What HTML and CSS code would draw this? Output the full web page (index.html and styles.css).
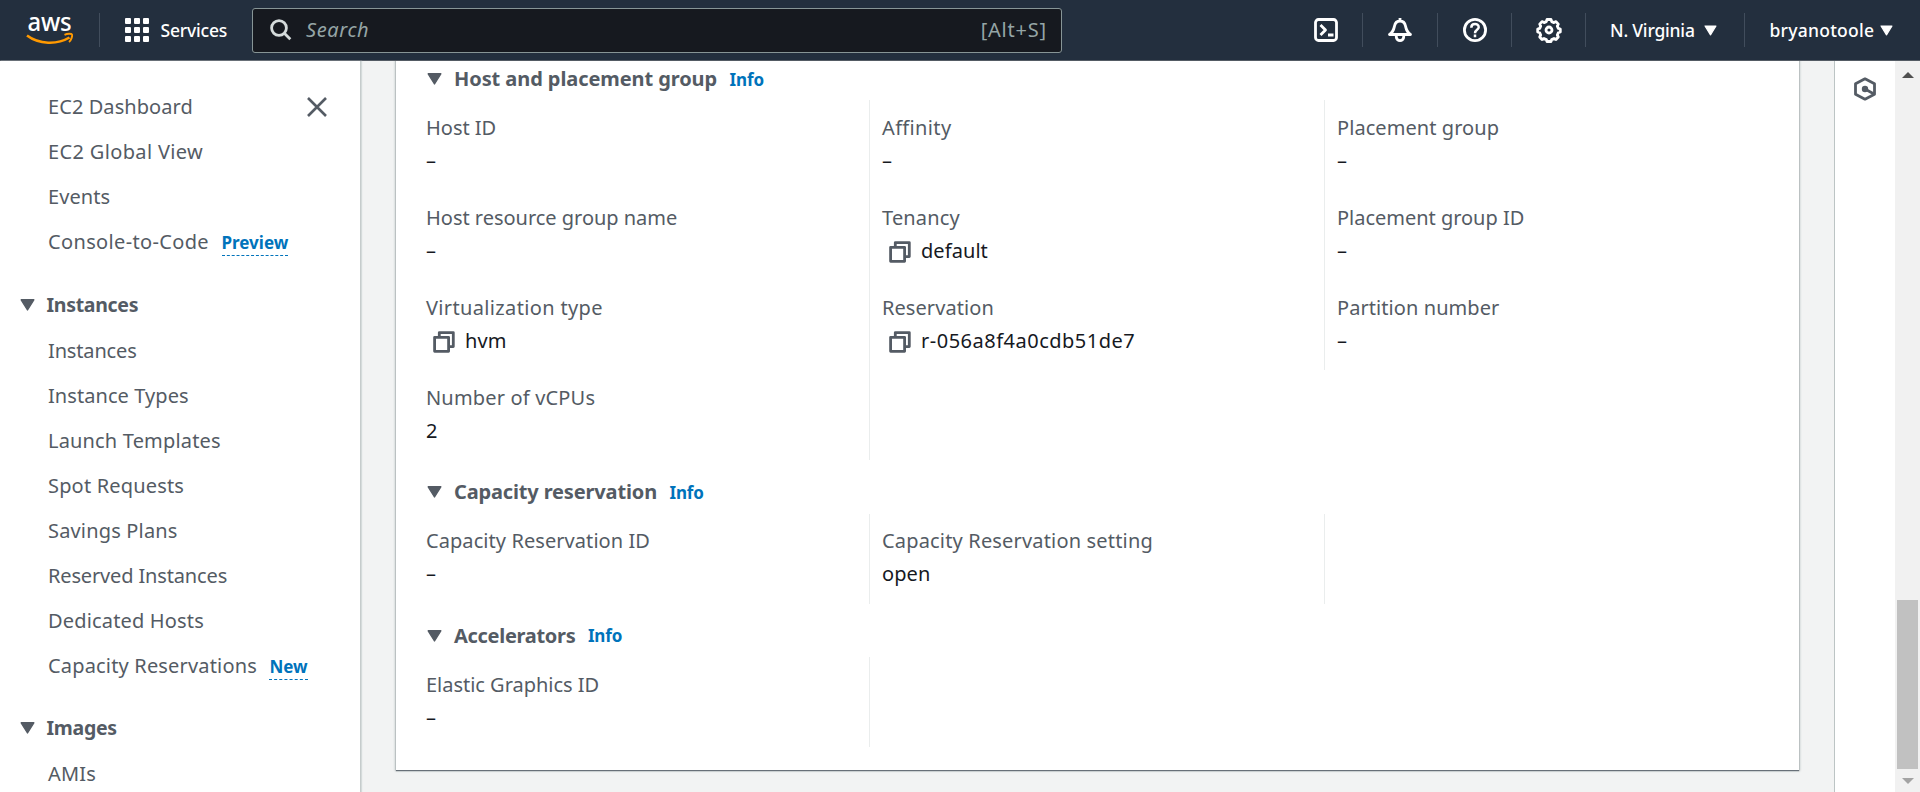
FILE: index.html
```html
<!DOCTYPE html>
<html lang="en">
<head>
<meta charset="utf-8">
<title>Instance details | EC2</title>
<link rel="stylesheet" href="styles.css">
</head>
<body>
<svg class="defs" width="0" height="0">
  <symbol id="caret" viewBox="0 0 15 12"><path d="M1.2 .8h12.6L7.5 11z" fill="currentColor" stroke="currentColor" stroke-width="1.4" stroke-linejoin="round"/></symbol>
  <symbol id="copy" viewBox="0 0 22 22"><g fill="none" stroke="currentColor" stroke-width="2.8" stroke-linejoin="round"><path d="M1.6 6.3h14v14h-14z"/><path d="M6.3 6V1.600h14v14h-4.500"/></g></symbol>
</svg>
<header class="nav">
  <a class="logo"><svg width="48" height="32" viewBox="0 0 48 32"><text class="aws" x="1.5" y="16.5" textLength="44" lengthAdjust="spacingAndGlyphs">aws</text><g fill="none" stroke="#ff9900"><path d="M1 21.5C13 30.500 31 31 43.500 23.500" stroke-width="2.6"/><path d="M38.500 20.800c3-1.500 7-1.300 7.500-.3.500 1.200-.4 5.400-3 7.500" stroke-width="1.900"/></g></svg></a>
  <span class="sep"></span>
  <a class="services"><span class="grid"><i></i><i></i><i></i><i></i><i></i><i></i><i></i><i></i><i></i></span><span>Services</span></a>
  <div class="search">
    <svg width="22" height="22" viewBox="0 0 22 22"><g fill="none" stroke="#d5dbdb" stroke-width="2.8"><circle cx="9" cy="9" r="7.400"/><path d="M14.300 14.300l6 6"/></g></svg>
    <span class="ph">Search</span><span class="key">[Alt+S]</span>
  </div>
  <div class="tools">
    <svg class="tool" viewBox="0 0 24 24"><rect x="1.500" y="1.500" width="21" height="21" rx="3"/><path d="M6.500 7l5 5-5 5M14 17h5.500"/></svg>
    <span class="sep"></span>
    <svg class="tool bell" viewBox="0 0 24 24"><path d="M12 0v3M1.500 16.500h21c-4-2.500-4.500-6-5-8.500-.6-3-2.500-5-5.500-5S7.100 5 6.500 8c-.5 2.500-1 6-5 8.500zM8.300 17v2c0 4.700 7.400 4.700 7.400 0v-2"/></svg>
    <span class="sep"></span>
    <svg class="tool" viewBox="0 0 24 24"><circle cx="12" cy="12" r="10.600"/><path d="M8.300 9.700c0-4.800 7.400-4.600 7.400-.5 0 2.800-3.700 2.500-3.700 6M12 16.500v2.800" stroke-width="2.500"/></svg>
    <span class="sep"></span>
    <svg class="tool" viewBox="0 0 24 24"><path d="M9.300 3.600 10 1.500h4l.7 2.100 2.300 1 2-1 2.300 2.500-1 2 1 2.300 2 .6v3l-2 .7-1 2.300 1 2-2.300 2.500-2-1-2.300 1-.7 2h-4l-.7-2-2.300-1-2 1-2.300-2.500 1-2-1-2.300-2-.7v-3l2-.6 1-2.300-1-2L5 3.600l2 1z"/><circle cx="12" cy="12" r="3"/></svg>
    <span class="sep"></span>
    <a class="menu region"><span>N. Virginia</span><svg class="nav-caret"><use href="#caret"/></svg></a>
    <span class="sep"></span>
    <a class="menu user"><span>bryanotoole</span><svg class="nav-caret"><use href="#caret"/></svg></a>
  </div>
</header>
<div class="body">
  <nav class="side">
    <div class="side-top">
      <ul>
        <li>EC2 Dashboard</li><li class="wider">EC2 Global View</li><li>Events</li><li><span class="wider">Console-to-Code</span><a class="tag">Preview</a></li>
      </ul>
      <svg class="close" viewBox="0 0 20 20"><path d="M1 1l18 18M19 1L1 19" stroke="currentColor" stroke-width="2.600"/></svg>
    </div>
    <h3><svg class="caret"><use href="#caret"/></svg>Instances</h3>
    <ul>
      <li class="tight">Instances</li><li>Instance Types</li><li class="wide">Launch Templates</li><li class="wide">Spot Requests</li><li class="wide">Savings Plans</li><li class="tight">Reserved Instances</li><li class="wide">Dedicated Hosts</li><li><span class="wide">Capacity Reservations</span><a class="tag">New</a></li>
    </ul>
    <h3><svg class="caret"><use href="#caret"/></svg>Images</h3>
    <ul><li class="wide">AMIs</li></ul>
  </nav>
  <main class="main">
    <section class="card">
      <h2><svg class="caret"><use href="#caret"/></svg>Host and placement group<a>Info</a></h2>
      <div class="cols">
        <dl>
          <dt class="flat">Host ID</dt><dd>–</dd>
          <dt class="flat">Host resource group name</dt><dd>–</dd>
          <dt class="wider">Virtualization type</dt><dd><svg class="copy"><use href="#copy"/></svg>hvm</dd>
          <dt class="wide">Number of vCPUs</dt><dd>2</dd>
        </dl>
        <dl class="stretch">
          <dt class="wider">Affinity</dt><dd>–</dd>
          <dt class="wide">Tenancy</dt><dd><svg class="copy"><use href="#copy"/></svg>default</dd>
          <dt>Reservation</dt><dd><svg class="copy"><use href="#copy"/></svg><span class="widest">r-056a8f4a0cdb51de7</span></dd>
        </dl>
        <dl>
          <dt>Placement group</dt><dd>–</dd>
          <dt class="flat">Placement group ID</dt><dd>–</dd>
          <dt>Partition number</dt><dd>–</dd>
        </dl>
      </div>
      <h2><svg class="caret"><use href="#caret"/></svg><span class="tight">Capacity reservation</span><a>Info</a></h2>
      <div class="cols">
        <dl><dt>Capacity Reservation ID</dt><dd>–</dd></dl>
        <dl><dt class="wide">Capacity Reservation setting</dt><dd>open</dd></dl>
        <dl class="stretch"></dl>
      </div>
      <h2><svg class="caret"><use href="#caret"/></svg><span class="tighter">Accelerators</span><a>Info</a></h2>
      <div class="cols">
        <dl><dt class="flat">Elastic Graphics ID</dt><dd>–</dd></dl>
        <dl class="stretch"></dl>
      </div>
    </section>
  </main>
  <aside class="rail"><svg width="24" height="24" viewBox="0 0 24 24"><path d="M12 1.800 21.500 6.800v10.400L12 22.200 2.500 17.200V6.800z" fill="none" stroke="currentColor" stroke-width="2.800" stroke-linejoin="round"/><circle cx="12" cy="12" r="3.200" fill="currentColor"/><path d="M12 12l9 5" stroke="currentColor" stroke-width="2.600"/></svg></aside>
  <div class="scroll"><span class="up"></span><span class="thumb"></span><span class="down"></span></div>
</div>
</body>
</html>
```
FILE: styles.css
```css
* { box-sizing: border-box; }
body { margin: 0; height: 792px; overflow: hidden; display: flex; flex-direction: column; font: 20px/30px "Noto Sans", sans-serif; letter-spacing: 0.07px; color: #545b64; background: #f2f3f3; }
svg { display: block; flex: none; overflow: visible; }
.defs { display: none; }
ul, dl, dd { margin: 0; padding: 0; list-style: none; }
.tighter { letter-spacing: -0.3px; }
.tight { letter-spacing: -0.15px; }
.flat { letter-spacing: -0.02px; }
.wide { letter-spacing: 0.17px; }
.wider { letter-spacing: 0.35px; }
.widest { letter-spacing: 0.5px; }
.nav { height: 61px; flex: none; display: flex; align-items: center; background: #232f3e; border-bottom: 1px solid #545b64; color: #fff; font-size: 17.5px; font-weight: 500; letter-spacing: -0.2px; }
.logo { margin-left: 26px; }
.aws { font: 500 25px "Noto Sans", sans-serif; fill: #fff; }
.sep { width: 1px; height: 34px; flex: none; background: #414d5c; }
.logo + .sep { margin-left: 25px; }
.services { display: flex; align-items: center; margin-left: 25px; width: 127px; }
.grid { display: grid; grid-template-columns: repeat(3, 6px); gap: 3px; margin-right: 11.5px; }
.grid i { height: 6px; background: #fff; border-radius: 1px; }
.search { width: 810px; height: 45px; display: flex; align-items: center; padding: 0 14px 0 17px; border: 1px solid #879596; border-radius: 3px; background: #16191f; color: #95a5a6; font-size: 20px; font-weight: 400; letter-spacing: 0.6px; }
.ph { font-style: italic; margin-left: 14px; }
.key { margin-left: auto; letter-spacing: 0.8px; }
.tools { display: flex; align-items: center; margin-left: 252px; }
.tool { width: 24px; height: 24px; fill: none; stroke: #fff; stroke-width: 2.8; stroke-linejoin: round; margin-right: 24px; }
.tools .sep + .tool { margin-left: 25px; }
.tools .bell { margin-right: 25px; }
.menu { display: flex; align-items: center; justify-content: space-between; }
.region { width: 107px; margin: 0 27px 0 24px; }
.user { width: 123px; margin-left: 24.5px; letter-spacing: 0.25px; }
.nav-caret { width: 13px; height: 11px; }
.body { flex: 1; display: flex; min-height: 0; }
.side { width: 361px; flex: none; background: #fff; border-right: 1px solid #c6cccc; overflow: hidden; box-shadow: 1px 0 1px #d5dbdb; padding-top: 23px; z-index: 1; }
.side-top { display: flex; justify-content: space-between; padding-right: 33px; margin-bottom: 19px; }
.close { width: 20px; height: 20px; margin-top: 13px; }
.side li { height: 45px; line-height: 45px; padding-left: 48px; white-space: nowrap; }
.side h3 { display: flex; align-items: center; gap: 12px; margin: 18px 0 1px; padding-left: 19.5px; height: 44px; font-size: 19.5px; font-weight: 700; letter-spacing: -0.3px; }
.caret { width: 15px; height: 12px; }
.tag, h2 a { color: #0073bb; font-size: 17px; font-weight: 700; letter-spacing: 0; }
.tag { margin-left: 12.5px; line-height: 24px; display: inline-block; border-bottom: 1px dashed #0073bb; }
.main { flex: 1; overflow: hidden; padding: 0 35px; }
.card { margin-top: -14px; height: 723px; background: #fff; padding: 0 18px 0 17px; box-shadow: 0 1px 1px 0 #687078, 0 0 2px 1px #bcc4c4; }
h2 { display: flex; align-items: center; margin: 0; height: 53.3px; padding: 11px 0 0 14px; font-size: 20px; font-weight: 700; letter-spacing: -0.08px; }
h2 .caret { margin-right: 12px; }
h2 a { margin-left: 12.5px; padding-top: 1px; letter-spacing: -0.15px; }
.cols { display: grid; grid-template-columns: 456px 455px 455px; align-items: start; }
dl { padding-left: 12px; border-left: 1px solid #eaeded; }
dl:first-child { border-color: transparent; }
.stretch { align-self: stretch; }
dt { padding-top: 12.7px; }
dd { height: 47.3px; padding-top: 3px; color: #16191f; display: flex; line-height: 30px; }
.copy { width: 22px; height: 22px; margin: 5.5px 10px 0 7px; color: #545b64; }
.rail { width: 61px; flex: none; background: #fff; border-left: 1px solid #bcc4c4; padding: 16px 0 0 18px; }
.scroll { width: 25px; flex: none; background: #f1f1f1; display: flex; flex-direction: column; align-items: center; }
.up, .down { border: 6px solid transparent; border-top: 0; border-bottom-color: #505050; margin-top: 11px; }
.thumb { width: 21px; height: 169px; background: #c1c1c1; margin-top: 522px; }
.down { border: 6px solid transparent; border-bottom: 0; border-top-color: #a3a3a3; margin-top: 9px; }
```
